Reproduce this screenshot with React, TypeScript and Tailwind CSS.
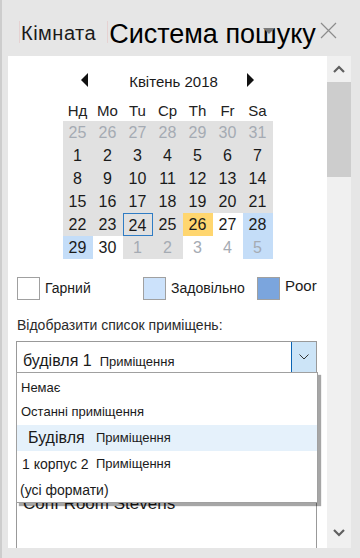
import React from 'react';

type Cell = { d: number; other?: boolean; bg: 'g' | 'w' | 'b' | 'y'; sel?: boolean };

const g = (d: number, other = false): Cell => ({ d, other, bg: 'g' });

const rows: Cell[][] = [
  [g(25, true), g(26, true), g(27, true), g(28, true), g(29, true), g(30, true), g(31, true)],
  [1, 2, 3, 4, 5, 6, 7].map(d => g(d)),
  [8, 9, 10, 11, 12, 13, 14].map(d => g(d)),
  [15, 16, 17, 18, 19, 20, 21].map(d => g(d)),
  [g(22), g(23), { d: 24, bg: 'g', sel: true }, g(25), { d: 26, bg: 'y' }, { d: 27, bg: 'w' }, { d: 28, bg: 'b' }],
  [
    { d: 29, bg: 'b' },
    { d: 30, bg: 'w' },
    g(1, true),
    g(2, true),
    { d: 3, other: true, bg: 'w' },
    { d: 4, other: true, bg: 'w' },
    { d: 5, other: true, bg: 'b' },
  ],
];

const bgClass: Record<Cell['bg'], string> = {
  g: 'bg-[#e1e1e1]',
  w: 'bg-white',
  b: 'bg-[#c4ddf8]',
  y: 'bg-[#ffd66f]',
};

const days = ['Нд', 'Mo', 'Tu', 'Ср', 'Th', 'Fr', 'Sa'];

const Chevron: React.FC<{ up?: boolean }> = ({ up }) => (
  <svg width="12" height="8" viewBox="0 0 12 8" className="block">
    <path d={up ? 'M1 7 L6 2 L11 7' : 'M1 1 L6 6 L11 1'} fill="none" stroke="#606060" strokeWidth={2.2} />
  </svg>
);

export default function App() {
  return (
    <div
      className="w-[360px] h-[558px] bg-[#e6e6e6] border-l-2 border-[#cdcdcd] overflow-hidden relative text-[#1a1a1a]"
      style={{ fontFamily: '"Liberation Sans", Arial, sans-serif' }}
    >
      {/* header */}
      <div className="h-[56px] flex items-start pl-[17px] pt-[21px] relative">
        <div className="h-[22px] border-l border-[#e6d2d2] pl-[1px] text-[20px] leading-[22px] pt-[1px] whitespace-nowrap tracking-[0.5px]">Кімната</div>
        <div className="ml-[11px] h-[22px] border-l border-[#e6d2d2]"></div>
        <div className="ml-[1px] text-[27px] leading-[30px] -mt-[2px] text-black whitespace-nowrap">Система пошуку</div>
        <div className="absolute left-[261px] top-[28px] w-0 h-0 border-l-[6px] border-r-[6px] border-t-[6px] border-l-transparent border-r-transparent border-t-[#7a7a7a]"></div>
        <svg className="absolute left-[318px] top-[22px]" width="17" height="17" viewBox="0 0 17 17">
          <path d="M1 1 L16 16 M16 1 L1 16" stroke="#8c8c8c" strokeWidth={1.2} />
        </svg>
      </div>

      {/* body */}
      <div className="flex ml-[6px] h-[492px]">
        <div className="w-[319px] h-full bg-white flex flex-col overflow-hidden">
          {/* month nav */}
          <div className="h-[44px] pt-[16px]">
            <div className="h-[16px] flex items-center justify-center">
              <div className="w-0 h-0 border-t-[7px] border-b-[7px] border-r-[7px] border-t-transparent border-b-transparent border-r-[#111]"></div>
              <div className="w-[159px] text-center text-[15px] leading-[16px] pt-[4px] pl-[12px]">Квітень 2018</div>
              <div className="w-0 h-0 border-t-[7px] border-b-[7px] border-l-[7px] border-t-transparent border-b-transparent border-l-[#111]"></div>
            </div>
          </div>

          {/* calendar */}
          <div className="w-[210px] mx-auto">
            <div className="grid grid-cols-7 h-[21px]">
              {days.map(d => (
                <div key={d} className="text-center text-[15px] leading-[18px] pt-[2px] text-[#222]">{d}</div>
              ))}
            </div>
            {rows.map((r, i) => (
              <div key={i} className="grid grid-cols-7">
                {r.map((c, j) => (
                  <div
                    key={j}
                    className={`h-[23px] text-center text-[16px] leading-[23px] ${bgClass[c.bg]} ${c.other ? 'text-[#a5abb3]' : 'text-[#1a1a1a]'} ${c.sel ? 'border border-[#2f7cc4] leading-[21px]' : ''}`}
                  >
                    {c.d}
                  </div>
                ))}
              </div>
            ))}
          </div>

          {/* legend */}
          <div className="flex mt-[18px] pl-[9px] h-[22px] items-center text-[14px]">
            <div className="w-[126px] flex items-center">
              <div className="w-[23px] h-[23px] border border-[#a0a0a0] bg-white"></div>
              <span className="ml-[5px]">Гарний</span>
            </div>
            <div className="w-[114px] flex items-center">
              <div className="w-[23px] h-[23px] border border-[#a0a0a0] bg-[#cce2fb]"></div>
              <span className="ml-[5px]">Задовільно</span>
            </div>
            <div className="flex items-center">
              <div className="w-[23px] h-[23px] border border-[#a0a0a0] bg-[#7ba5dd]"></div>
              <span className="ml-[5px] -mt-[3px] text-[15px]">Poor</span>
            </div>
          </div>

          <div className="mt-[16px] pl-[9px] text-[14px] leading-[20px] text-[#2b2b2b]">Відобразити список приміщень:</div>

          {/* combo + list */}
          <div className="relative mt-[6px] ml-[8px] mr-[10px] flex-1 flex flex-col">
            <div className="h-[32px] border border-[#999] flex items-stretch">
              <div className="flex-1 flex items-baseline pl-[6px] pt-[7px] whitespace-nowrap">
                <span className="text-[16px]">будівля 1</span>
                <span className="ml-[8px] text-[13px]">Приміщення</span>
              </div>
              <div className="w-[25px] bg-[#cce4f7] border-l border-[#0a64b4] flex items-center justify-center">
                <svg width="10" height="6" viewBox="0 0 10 6"><path d="M0.5 0.5 L5 5 L9.5 0.5" fill="none" stroke="#333" strokeWidth={1} /></svg>
              </div>
            </div>
            <div className="flex-1 border-l border-r border-[#999]">
              <div className="pl-[6px] pt-[121px] text-[17px] leading-[20px] whitespace-nowrap">Conf Room Stevens</div>
            </div>

            {/* popup */}
            <div className="absolute left-0 top-[31px] w-[302px] h-[131px] bg-white border border-[#a0a0a0] shadow-[3px_3px_1px_rgba(0,0,0,0.35)] text-[13px] whitespace-nowrap">
              <div className="h-[26px] pl-[4px] flex items-center pt-[3px]">Немає</div>
              <div className="h-[26px] pl-[4px] flex items-center">Останні приміщення</div>
              <div className="h-[26px] bg-[#e5f1fb] flex items-center">
                <span className="pl-[11px] text-[16px] w-[79px] shrink-0">Будівля</span>
                <span>Приміщення</span>
              </div>
              <div className="h-[26px] flex items-center">
                <span className="pl-[5px] text-[14px] w-[79px] shrink-0">1 корпус 2</span>
                <span>Приміщення</span>
              </div>
              <div className="h-[26px] pl-[3px] flex items-center text-[14px]">(усі формати)</div>
            </div>
          </div>
        </div>

        {/* scrollbar */}
        <div className="w-[24px] h-full bg-[#f0f0f0] flex flex-col">
          <div className="h-[26px] flex items-center justify-center"><Chevron up /></div>
          <div className="h-[95px] bg-[#cdcdcd]"></div>
          <div className="flex-1"></div>
          <div className="h-[26px] flex items-center justify-center pb-[4px]"><Chevron /></div>
        </div>
      </div>
    </div>
  );
}
